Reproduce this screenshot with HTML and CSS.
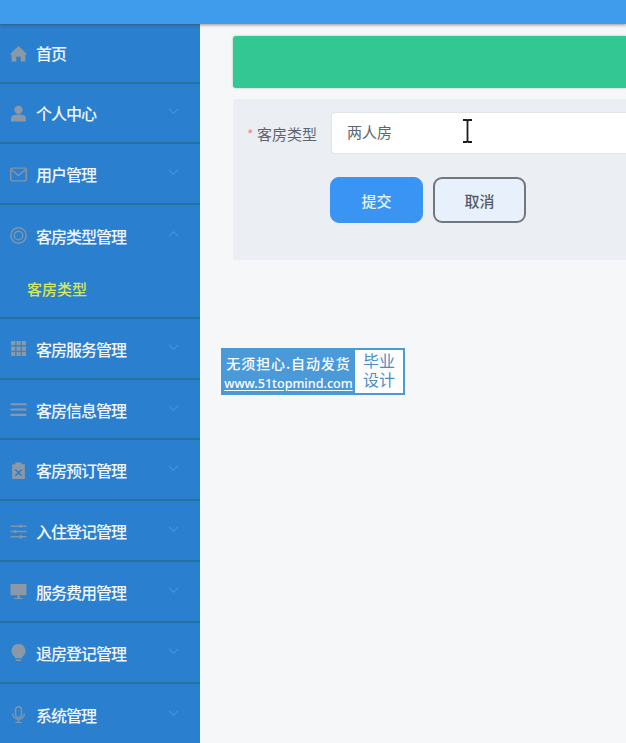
FILE: index.html
```html
<!DOCTYPE html>
<html lang="zh">
<head>
<meta charset="utf-8">
<title>客房类型</title>
<link rel="stylesheet" href="styles.css">
</head>
<body>
<header class="topbar"></header>
<div class="layout">
  <nav class="sidebar">
    <div class="item first">
      <svg class="icon" viewBox="0 0 16 16"><path d="M8 1 0 8.500 1.500 9.500V15.500h4.500v-4.500h4v4.500h4.500V9.500l1.500-1z"/></svg>
      <span class="label">首页</span>
    </div>
    <div class="item">
      <svg class="icon" viewBox="0 0 16 16"><circle cx="8" cy="4.500" r="3.900"/><path d="M1 15.500v-3C1 10 3.500 9 8 9s7 1 7 3.500v3z"/></svg>
      <span class="label">个人中心</span>
      <svg class="chev" viewBox="0 0 12 8"><path d="M1 1.500 6 6.500 11 1.500"/></svg>
    </div>
    <div class="item">
      <svg class="icon line" viewBox="0 0 16 16"><rect x="0.700" y="2" width="14.600" height="12" rx="1.500"/><path d="M1.500 3.500 8 9l6.500-5.500"/></svg>
      <span class="label">用户管理</span>
      <svg class="chev" viewBox="0 0 12 8"><path d="M1 1.500 6 6.500 11 1.500"/></svg>
    </div>
    <div class="item open">
      <svg class="icon line" viewBox="0 0 16 16"><circle cx="8" cy="8" r="7.200"/><circle cx="8" cy="8" r="4"/></svg>
      <span class="label">客房类型管理</span>
      <svg class="chev" viewBox="0 0 12 8"><path d="M1 6.500 6 1.500 11 6.500"/></svg>
    </div>
    <div class="sub"><span class="sublabel">客房类型</span></div>
    <div class="item">
      <svg class="icon" viewBox="0 0 16 16"><path d="M1 1h4v4H1zM6 1h4v4H6zM11 1h4v4h-4zM1 6h4v4H1zM6 6h4v4H6zM11 6h4v4h-4zM1 11h4v4H1zM6 11h4v4H6zM11 11h4v4h-4z"/></svg>
      <span class="label">客房服务管理</span>
      <svg class="chev" viewBox="0 0 12 8"><path d="M1 1.500 6 6.500 11 1.500"/></svg>
    </div>
    <div class="item">
      <svg class="icon" viewBox="0 0 16 16"><path d="M0.500 2h15v2h-15zM0.500 7h15v2h-15zM0.500 12h15v2h-15z"/></svg>
      <span class="label">客房信息管理</span>
      <svg class="chev" viewBox="0 0 12 8"><path d="M1 1.500 6 6.500 11 1.500"/></svg>
    </div>
    <div class="item">
      <svg class="icon" viewBox="0 0 16 16"><path d="M2 2h3V.500h6V2h3v14H2zM5.500 6.500 4.500 7.500 7 10l-2.500 2.500 1 1L8 11l2.500 2.500 1-1L9 10l2.500-2.500-1-1L8 9z"/></svg>
      <span class="label">客房预订管理</span>
      <svg class="chev" viewBox="0 0 12 8"><path d="M1 1.500 6 6.500 11 1.500"/></svg>
    </div>
    <div class="item">
      <svg class="icon line" viewBox="0 0 16 16"><path d="M0.500 3h15M0.500 8h15M0.500 13h15"/><path class="knob" d="M9 1.500h2v3H9zM4 6.500h2v3H4zM9 11.500h2v3H9z"/></svg>
      <span class="label">入住登记管理</span>
      <svg class="chev" viewBox="0 0 12 8"><path d="M1 1.500 6 6.500 11 1.500"/></svg>
    </div>
    <div class="item">
      <svg class="icon" viewBox="0 0 16 16"><path d="M0.500 1h15v10.500h-15zM7 11.500h2V14h3v1H4v-1h3z"/></svg>
      <span class="label">服务费用管理</span>
      <svg class="chev" viewBox="0 0 12 8"><path d="M1 1.500 6 6.500 11 1.500"/></svg>
    </div>
    <div class="item">
      <svg class="icon" viewBox="0 0 16 16"><path d="M8 0a6.500 6.500 0 0 1 3.500 12v1.500h-7V12A6.500 6.500 0 0 1 8 0zM5.500 14.500h5V16h-5z"/></svg>
      <span class="label">退房登记管理</span>
      <svg class="chev" viewBox="0 0 12 8"><path d="M1 1.500 6 6.500 11 1.500"/></svg>
    </div>
    <div class="item last">
      <svg class="icon line" viewBox="0 0 16 16"><rect x="5.200" y="0.700" width="5.600" height="10" rx="2.800"/><path d="M2.500 7a5.500 5.500 0 0 0 11 0M8 12.500V15.500M5 15.500h6"/></svg>
      <span class="label">系统管理</span>
      <svg class="chev" viewBox="0 0 12 8"><path d="M1 1.500 6 6.500 11 1.500"/></svg>
    </div>
  </nav>
  <main class="main">
    <div class="banner"></div>
    <form class="panel">
      <div class="field">
        <label class="field-label"><span class="star">*</span> 客房类型</label>
        <div class="input">两人房</div>
      </div>
      <div class="actions">
        <button type="button" class="btn primary">提交</button>
        <button type="button" class="btn plain">取消</button>
      </div>
    </form>
  </main>
</div>
<div class="stamp">
  <div class="stamp-left">
    <div class="stamp-top">无须担心.自动发货</div>
    <div class="stamp-url">www.51topmind.com</div>
  </div>
  <div class="stamp-right">
    <div class="stamp-word">毕业</div>
    <div class="stamp-word">设计</div>
  </div>
</div>
<svg class="cursor" viewBox="0 0 11 24"><path d="M1 1h3.500l1 1 1-1H10M5.500 2v20M1 23h3.500l1-1 1 1H10"/></svg>
</body>
</html>
```
FILE: styles.css
```css
* { box-sizing: border-box; }
html, body { height: 100%; }
body {
  margin: 0;
  width: 626px;
  height: 743px;
  overflow: hidden;
  position: relative;
  background: #f5f7f9;
  font-family: "Noto Sans CJK SC", "Noto Sans", sans-serif;
}
.topbar {
  height: 24px;
  background: #3f9bec;
  box-shadow: 0 1px 3px rgba(60, 60, 60, 0.55);
  position: relative;
  z-index: 2;
}
.layout { display: flex; height: 719px; }
.sidebar {
  width: 200px;
  flex: none;
  background: #2a7fce;
  color: #f0f7fc;
}
.item {
  height: 60.800px;
  display: flex;
  align-items: center;
  padding: 1px 21px 0 10px;
  border-bottom: 2px solid #25739f;
}
.item.first { height: 59.500px; }
.item.open { border-bottom: 0; }
.item.last { border-bottom: 0; }
.icon {
  width: 17px;
  height: 17px;
  flex: none;
  margin-right: 9px;
  fill: #8a98a8;
}
.icon.line {
  fill: none;
  stroke: #7f95ab;
  stroke-width: 1.400;
}
.knob { fill: #7f95ab; stroke: none; }
.label {
  font-size: 16px;
  font-weight: 500;
  line-height: 20px;
  letter-spacing: -1px;
  flex: 1;
}
.chev {
  width: 11px;
  height: 8px;
  flex: none;
  margin-bottom: 4px;
  fill: none;
  stroke: #4d96d6;
  stroke-width: 1.100;
}
.sub {
  height: 53px;
  padding: 0 0 6px 27px;
  display: flex;
  align-items: center;
  border-bottom: 2px solid #25739f;
}
.sublabel {
  font-size: 15px;
  font-weight: 500;
  color: #d4e85a;
}
.main {
  flex: 1;
  min-width: 0;
  padding: 12px 0 0 33px;
}
.banner {
  height: 52px;
  background: #33c893;
  border-radius: 3px 0 0 3px;
  box-shadow: 0 0 2px rgba(40, 130, 100, 0.5);
}
.panel {
  margin-top: 11px;
  height: 161px;
  background: #ebeff3;
  border-radius: 3px 0 0 3px;
  padding: 13px 0 0 0;
}
.field { display: flex; align-items: center; }
.field-label {
  width: 98px;
  flex: none;
  padding-left: 14px;
  font-size: 15px;
  color: #5f6670;
  white-space: nowrap;
}
.star { color: #ef8a8a; font-size: 14px; }
.input {
  flex: 1;
  height: 42px;
  background: #fff;
  border: 1px solid #e1e5ea;
  border-right: 0;
  border-radius: 4px 0 0 4px;
  padding-left: 15px;
  font-size: 15px;
  line-height: 38px;
  color: #606670;
}
.actions {
  display: flex;
  gap: 10px;
  margin: 23px 0 0 97px;
}
.btn {
  width: 93px;
  height: 46px;
  border-radius: 9px;
  font-family: inherit;
  font-size: 15px;
  font-weight: 500;
  padding: 0;
}
.primary { background: #3a94f3; border: 1px solid #3a94f3; color: #e9f3fd; }
.plain { background: #e8f1fb; border: 2px solid #70777f; color: #555c66; }
.stamp {
  position: absolute;
  left: 221px;
  top: 348px;
  width: 184px;
  height: 47px;
  background: #4a9ad9;
  display: flex;
  padding: 2px 2px 2px 0;
  color: #fff;
}
.stamp-left { width: 134px; flex: none; padding-left: 1px; text-align: center; }
.stamp-top {
  font-family: "Noto Sans CJK SC", sans-serif;
  font-size: 14px;
  font-weight: 500;
  line-height: 26px;
  letter-spacing: 0.900px;
}
.stamp-url {
  font-family: "Noto Sans", sans-serif;
  font-size: 12.600px;
  font-weight: 500;
  line-height: 16px;
  white-space: nowrap;
  text-decoration: underline;
  text-underline-offset: 2px;
}
.stamp-right {
  flex: 1;
  background: #fdfdfd;
  color: #4a8fc4;
  text-align: center;
  font-family: "Liberation Sans", "Noto Sans CJK SC", sans-serif;
  font-size: 16px;
  padding-top: 2px;
}
.stamp-word { line-height: 19px; }
.cursor {
  position: absolute;
  left: 462px;
  top: 119px;
  width: 11px;
  height: 24px;
  fill: none;
  stroke: #1c1c1c;
  stroke-width: 1.800;
}
```
